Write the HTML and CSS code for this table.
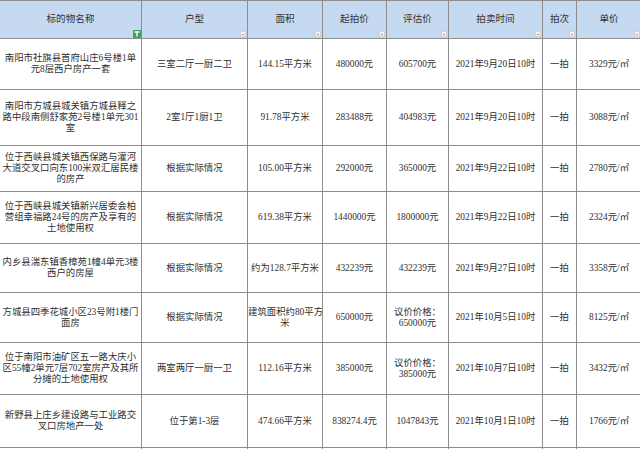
FILE: index.html
```html
<!DOCTYPE html>
<html lang="zh">
<head>
<meta charset="utf-8">
<link rel="stylesheet" href="styles.css">
</head>
<body>
<table class="sheet">
  <colgroup>
    <col class="c1"><col class="c2"><col class="c3"><col class="c4"><col class="c5"><col class="c6"><col class="c7"><col class="c8">
  </colgroup>
  <thead>
    <tr class="h">
      <th>标的物名称<span class="filt"><svg width="8" height="8" viewBox="0 0 8 8"><path d="M1.5 2h5M4 2v4.5" stroke="#fff" stroke-width="1.3" fill="none"/></svg></span></th>
      <th>户型<span class="dd"></span></th>
      <th>面积<span class="dd"></span></th>
      <th>起拍价<span class="dd"></span></th>
      <th>评估价<span class="dd"></span></th>
      <th>拍卖时间<span class="dd"></span></th>
      <th>拍次<span class="dd"></span></th>
      <th>单价<span class="dd"></span></th>
    </tr>
  </thead>
  <tbody>
    <tr class="r1">
      <td class="name">南阳市社旗县首府山庄6号楼1单<br>元8层西户房产一套</td><td>三室二厅一厨二卫</td><td>144.15平方米</td><td>480000元</td><td>605700元</td><td>2021年9月20日10时</td><td>一拍</td><td>3329元/㎡</td>
    </tr>
    <tr class="r2">
      <td class="name">南阳市方城县城关镇方城县释之<br>路中段南侧舒家苑2号楼1单元301<br>室</td><td>2室1厅1厨1卫</td><td>91.78平方米</td><td>283488元</td><td>404983元</td><td>2021年9月20日10时</td><td>一拍</td><td>3088元/㎡</td>
    </tr>
    <tr class="r3">
      <td class="name">位于西峡县城关镇西保路与灌河<br>大道交叉口向东100米双汇居民楼<br>的房产</td><td>根据实际情况</td><td>105.00平方米</td><td>292000元</td><td>365000元</td><td>2021年9月22日10时</td><td>一拍</td><td>2780元/㎡</td>
    </tr>
    <tr class="r4">
      <td class="name">位于西峡县城关镇新兴居委会柏<br>营组幸福路24号的房产及享有的<br>土地使用权</td><td>根据实际情况</td><td>619.38平方米</td><td>1440000元</td><td>1800000元</td><td>2021年9月22日10时</td><td>一拍</td><td>2324元/㎡</td>
    </tr>
    <tr class="r5">
      <td class="name">内乡县湍东镇香樟苑1幢4单元3楼<br>西户的房屋</td><td>根据实际情况</td><td class="nw">约为128.7平方米</td><td>432239元</td><td>432239元</td><td>2021年9月27日10时</td><td>一拍</td><td>3358元/㎡</td>
    </tr>
    <tr class="r6">
      <td class="name">方城县四季花城小区23号附1楼门<br>面房</td><td>根据实际情况</td><td class="nw">建筑面积约80平方<br>米</td><td>650000元</td><td>议价价格：<br>650000元</td><td>2021年10月5日10时</td><td>一拍</td><td>8125元/㎡</td>
    </tr>
    <tr class="r7">
      <td class="name">位于南阳市油矿区五一路大庆小<br>区55幢2单元7层702室房产及其所<br>分摊的土地使用权</td><td>两室两厅一厨一卫</td><td>112.16平方米</td><td>385000元</td><td>议价价格：<br>385000元</td><td>2021年10月7日10时</td><td>一拍</td><td>3432元/㎡</td>
    </tr>
    <tr class="r8">
      <td class="name">新野县上庄乡建设路与工业路交<br>叉口房地产一处</td><td>位于第1-3层</td><td>474.66平方米</td><td>838274.4元</td><td>1047843元</td><td>2021年10月1日10时</td><td>一拍</td><td>1766元/㎡</td>
    </tr>
    <tr class="r9"><td></td><td></td><td></td><td></td><td></td><td></td><td></td><td></td></tr>
  </tbody>
</table>
</body>
</html>
```

FILE: styles.css
```css
html, body {
  margin: 0;
  padding: 0;
  background: #ffffff;
}
body {
  width: 640px;
  height: 449px;
  overflow: hidden;
  font-family: "Liberation Serif", "Noto Sans CJK SC", serif;
  color: #2f2f2f;
}
.sheet {
  width: 642px;
  margin-left: -1px;
  border-collapse: collapse;
  table-layout: fixed;
  font-size: 9.4px;
  line-height: 11px;
}
.c1 { width: 142px; }
.c2 { width: 106px; }
.c3 { width: 75px; }
.c4 { width: 64px; }
.c5 { width: 62px; }
.c6 { width: 94px; }
.c7 { width: 34px; }
.c8 { width: 65px; }
.sheet th, .sheet td {
  border: 1px solid #8d8d8d;
  text-align: center;
  vertical-align: middle;
  padding: 0 2px;
  overflow: hidden;
}
.sheet td.name,
.sheet td.nw {
  white-space: nowrap;
  padding: 0;
}
.sheet th {
  position: relative;
  background: #c5d9f0;
  font-weight: normal;
  font-size: 9.6px;
  color: #333;
  padding-bottom: 3px;
}
.h { height: 38px; }
.r1 { height: 51px; }
.r2 { height: 56px; }
.r3 { height: 46px; }
.r4 { height: 52px; }
.r5 { height: 49px; }
.r6 { height: 50px; }
.r7 { height: 52px; }
.r8 { height: 53px; }
.r9 { height: 20px; }
.dd {
  position: absolute;
  right: 1px;
  bottom: 1px;
  width: 6px;
  height: 6px;
  background: #f4f4f4;
  border: 1px solid #d0d0d0;
  box-sizing: border-box;
}
.dd::after {
  content: "";
  position: absolute;
  left: 1px;
  top: 2px;
  border-left: 1.5px solid transparent;
  border-right: 1.5px solid transparent;
  border-top: 1.5px solid #444;
}
.filt {
  position: absolute;
  right: 0;
  bottom: 0;
  width: 8px;
  height: 8px;
  background: #3aa35f;
  display: flex;
}
```
